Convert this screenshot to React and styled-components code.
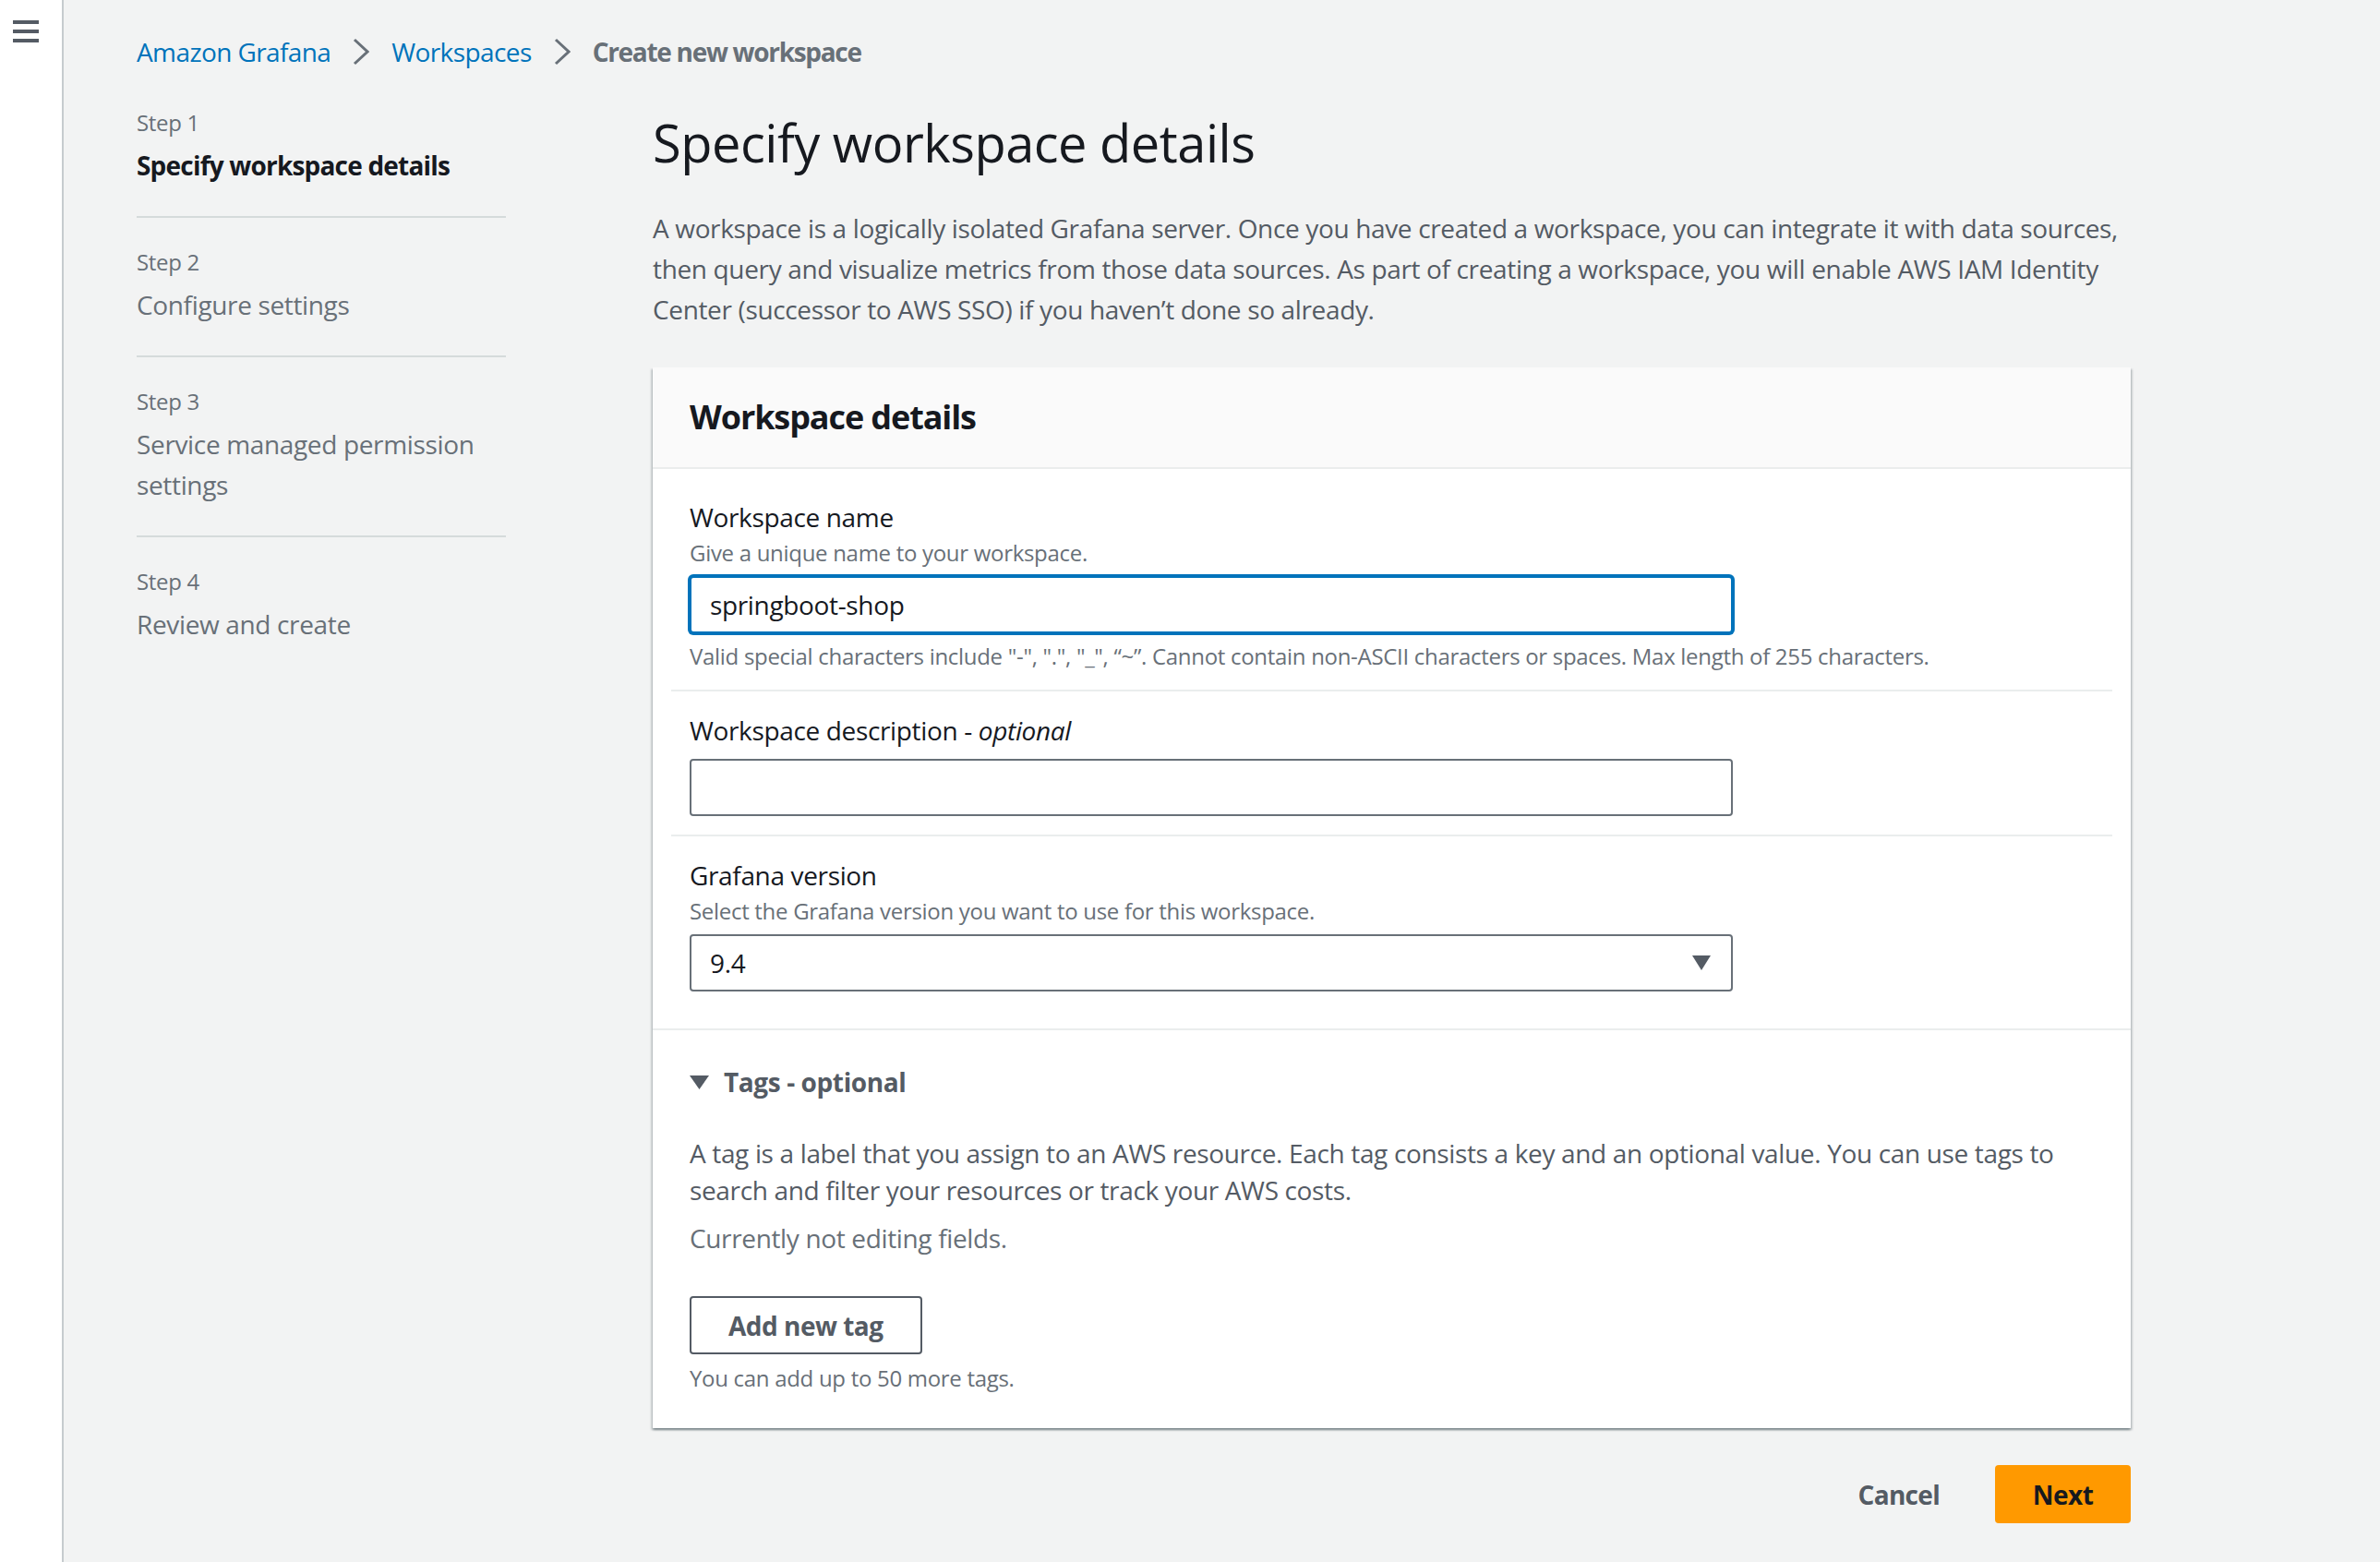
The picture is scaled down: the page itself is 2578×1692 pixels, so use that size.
import React from "react";
import styled, { createGlobalStyle } from "styled-components";

const GlobalStyle = createGlobalStyle`
  html, body { margin: 0; padding: 0; }
  body {
    background: #f2f3f3;
    font-family: "Open Sans", "Noto Sans", sans-serif;
    color: #16191f;
    letter-spacing: -0.35px;
  }
  * { box-sizing: border-box; }
`;

const Page = styled.div`
  display: flex;
  min-height: 1692px;
`;

const NavRail = styled.aside`
  width: 69px;
  flex-shrink: 0;
  background: #ffffff;
  border-right: 2px solid #c6cbce;
  padding: 22px 0 0 14px;
`;

const Main = styled.main`
  flex: 1;
  padding: 34px 0 40px 79px;
`;

const Breadcrumbs = styled.nav`
  display: flex;
  align-items: center;
  gap: 24px;
  height: 44px;
  font-size: 28px;
  line-height: 44px;
`;

const Crumb = styled.a`
  color: #0073bb;
  text-decoration: none;
  letter-spacing: -0.6px;
`;

const CurrentCrumb = styled.span`
  color: #687078;
  font-weight: 700;
  letter-spacing: -1.3px;
`;

const Layout = styled.div`
  display: grid;
  grid-template-columns: 400px 1601px;
  column-gap: 159px;
  margin-top: 39px;
  align-items: start;
`;

const Steps = styled.ol`
  list-style: none;
  margin: 0;
  padding: 0;
`;

const StepItem = styled.li`
  padding: 32px 0 33px;
  border-bottom: 2px solid #d5dbdb;
  &:first-child { padding-top: 0; }
  &:last-child { border-bottom: none; }
`;

const StepLabel = styled.div`
  font-size: 24px;
  line-height: 32px;
  color: #687078;
  margin-bottom: 8px;
  letter-spacing: -0.3px;
`;

const StepTitle = styled.div`
  font-size: 28px;
  line-height: 44px;
  color: ${(p) => (p.$active ? "#16191f" : "#687078")};
  font-weight: ${(p) => (p.$active ? 700 : 400)};
  letter-spacing: ${(p) => (p.$active ? "-0.8px" : "-0.35px")};
`;

const Content = styled.section`
  display: flex;
  flex-direction: column;
`;

const H1 = styled.h1`
  margin: 1px 0 0;
  font-size: 56px;
  line-height: 72px;
  font-weight: 400;
  color: #16191f;
  letter-spacing: -0.5px;
`;

const Intro = styled.p`
  margin: 35px 0 0;
  font-size: 28px;
  line-height: 44px;
  color: #545b64;
`;

const Container = styled.div`
  margin-top: 41px;
  background: #ffffff;
  box-shadow: 0 2px 2px 0 rgba(0, 28, 36, 0.3), 2px 2px 2px 0 rgba(0, 28, 36, 0.15),
    -2px 2px 2px 0 rgba(0, 28, 36, 0.15);
`;

const ContainerHeader = styled.div`
  background: #fafafa;
  border-bottom: 2px solid #eaeded;
  padding: 32px 40px;
`;

const H2 = styled.h2`
  margin: 0;
  font-size: 36px;
  line-height: 44px;
  font-weight: 700;
  color: #16191f;
  letter-spacing: -1.1px;
`;

const FieldList = styled.div`
  padding: 10px 20px 20px;
`;

const Field = styled.div`
  padding: 20px 20px;
  & + & { border-top: 2px solid #eaeded; }
`;

const Label = styled.label`
  display: block;
  font-size: 28px;
  line-height: 44px;
  color: #16191f;
  em { font-style: italic; }
`;

const Description = styled.div`
  margin-top: 1px;
  font-size: 24px;
  line-height: 32px;
  color: #687078;
  letter-spacing: -0.3px;
`;

const Control = styled.div`
  margin-top: 9px;
  width: 1130px;
`;

const TextInput = styled.input`
  width: 100%;
  height: 62px;
  border: 2px solid ${(p) => (p.$focused ? "#0073bb" : "#687078")};
  border-radius: 4px;
  padding: 0 20px;
  font-family: inherit;
  font-size: 28px;
  letter-spacing: -0.35px;
  color: #16191f;
  background: #ffffff;
  outline: none;
  box-shadow: ${(p) => (p.$focused ? "0 0 0 2px #0073bb" : "none")};
`;

const SelectBox = styled.div`
  width: 100%;
  height: 62px;
  border: 2px solid #687078;
  border-radius: 4px;
  padding: 0 22px 0 20px;
  display: flex;
  align-items: center;
  justify-content: space-between;
  font-size: 28px;
  color: #16191f;
  background: #ffffff;
`;

const Constraint = styled.div`
  margin-top: 9px;
  font-size: 24px;
  line-height: 32px;
  color: #687078;
  letter-spacing: -0.3px;
`;

const TagsSection = styled.div`
  border-top: 2px solid #eaeded;
  padding: 34px 40px 38px;
`;

const TagsHeader = styled.div`
  display: flex;
  align-items: center;
  gap: 16px;
  font-size: 28px;
  line-height: 44px;
  font-weight: 700;
  color: #545b64;
  letter-spacing: -0.4px;
`;

const TagsBody = styled.div`
  display: flex;
  flex-direction: column;
`;

const TagsText = styled.p`
  margin: 35px 0 0;
  font-size: 28px;
  line-height: 40px;
  color: #545b64;
`;

const Muted = styled.p`
  margin: 10px 0 0;
  font-size: 28px;
  line-height: 44px;
  color: #687078;
`;

const NormalButton = styled.button`
  margin-top: 41px;
  height: 63px;
  padding: 0 40px;
  border: 2px solid #545b64;
  border-radius: 4px;
  background: #ffffff;
  font-family: inherit;
  font-size: 28px;
  font-weight: 700;
  letter-spacing: -0.5px;
  color: #545b64;
  align-self: flex-start;
`;

const Hint = styled.div`
  margin-top: 10px;
  font-size: 24px;
  line-height: 32px;
  color: #687078;
  letter-spacing: -0.3px;
`;

const Actions = styled.div`
  display: flex;
  justify-content: flex-end;
  align-items: center;
  gap: 20px;
  margin-top: 40px;
`;

const LinkButton = styled.button`
  height: 63px;
  padding: 0 40px;
  border: none;
  background: transparent;
  font-family: inherit;
  font-size: 28px;
  font-weight: 700;
  letter-spacing: -0.7px;
  color: #545b64;
`;

const PrimaryButton = styled.button`
  height: 63px;
  width: 147px;
  padding: 0;
  border: none;
  border-radius: 4px;
  background: #ff9900;
  font-family: inherit;
  font-size: 28px;
  font-weight: 700;
  letter-spacing: -0.5px;
  color: #16191f;
`;

const MenuIcon = () => (
  <svg width="28" height="24" viewBox="0 0 28 24" aria-hidden="true">
    <rect x="0" y="0" width="28" height="4" fill="#545b64" />
    <rect x="0" y="10" width="28" height="4" fill="#545b64" />
    <rect x="0" y="20" width="28" height="4" fill="#545b64" />
  </svg>
);

const Chevron = () => (
  <svg width="18" height="30" viewBox="0 0 18 30" aria-hidden="true">
    <path d="M2 2 L16 15 L2 28" fill="none" stroke="#687078" strokeWidth="3" />
  </svg>
);

const CaretDown = ({ w = 20, h = 16 }) => (
  <svg width={w} height={h} viewBox="0 0 20 16" preserveAspectRatio="none" aria-hidden="true">
    <path d="M0 0 L20 0 L10 16 Z" fill="#545b64" />
  </svg>
);

const steps = [
  { label: "Step 1", title: "Specify workspace details", active: true },
  { label: "Step 2", title: "Configure settings" },
  { label: "Step 3", title: "Service managed permission settings" },
  { label: "Step 4", title: "Review and create" },
];

export default function App() {
  return (
    <>
      <GlobalStyle />
      <Page>
        <NavRail>
          <MenuIcon />
        </NavRail>
        <Main>
          <Breadcrumbs>
            <Crumb href="#">Amazon Grafana</Crumb>
            <Chevron />
            <Crumb href="#">Workspaces</Crumb>
            <Chevron />
            <CurrentCrumb>Create new workspace</CurrentCrumb>
          </Breadcrumbs>
          <Layout>
            <Steps>
              {steps.map((s) => (
                <StepItem key={s.label}>
                  <StepLabel>{s.label}</StepLabel>
                  <StepTitle $active={s.active}>{s.title}</StepTitle>
                </StepItem>
              ))}
            </Steps>
            <Content>
              <H1>Specify workspace details</H1>
              <Intro>
                A workspace is a logically isolated Grafana server. Once you have created a workspace, you
                can integrate it with data sources, then query and visualize metrics from those data
                sources. As part of creating a workspace, you will enable AWS IAM Identity Center
                (successor to AWS SSO) if you haven’t done so already.
              </Intro>
              <Container>
                <ContainerHeader>
                  <H2>Workspace details</H2>
                </ContainerHeader>
                <FieldList>
                  <Field>
                    <Label>Workspace name</Label>
                    <Description>Give a unique name to your workspace.</Description>
                    <Control>
                      <TextInput $focused defaultValue="springboot-shop" />
                    </Control>
                    <Constraint>
                      Valid special characters include "-", ".", "_", “~”. Cannot contain non-ASCII
                      characters or spaces. Max length of 255 characters.
                    </Constraint>
                  </Field>
                  <Field>
                    <Label>
                      Workspace description - <em>optional</em>
                    </Label>
                    <Control>
                      <TextInput defaultValue="" />
                    </Control>
                  </Field>
                  <Field>
                    <Label>Grafana version</Label>
                    <Description>Select the Grafana version you want to use for this workspace.</Description>
                    <Control>
                      <SelectBox>
                        <span>9.4</span>
                        <CaretDown />
                      </SelectBox>
                    </Control>
                  </Field>
                </FieldList>
                <TagsSection>
                  <TagsHeader>
                    <CaretDown w={21} h={15} />
                    <span>Tags - optional</span>
                  </TagsHeader>
                  <TagsBody>
                    <TagsText>
                      A tag is a label that you assign to an AWS resource. Each tag consists a key and an
                      optional value. You can use tags to search and filter your resources or track your AWS
                      costs.
                    </TagsText>
                    <Muted>Currently not editing fields.</Muted>
                    <NormalButton>Add new tag</NormalButton>
                    <Hint>You can add up to 50 more tags.</Hint>
                  </TagsBody>
                </TagsSection>
              </Container>
              <Actions>
                <LinkButton>Cancel</LinkButton>
                <PrimaryButton>Next</PrimaryButton>
              </Actions>
            </Content>
          </Layout>
        </Main>
      </Page>
    </>
  );
}
